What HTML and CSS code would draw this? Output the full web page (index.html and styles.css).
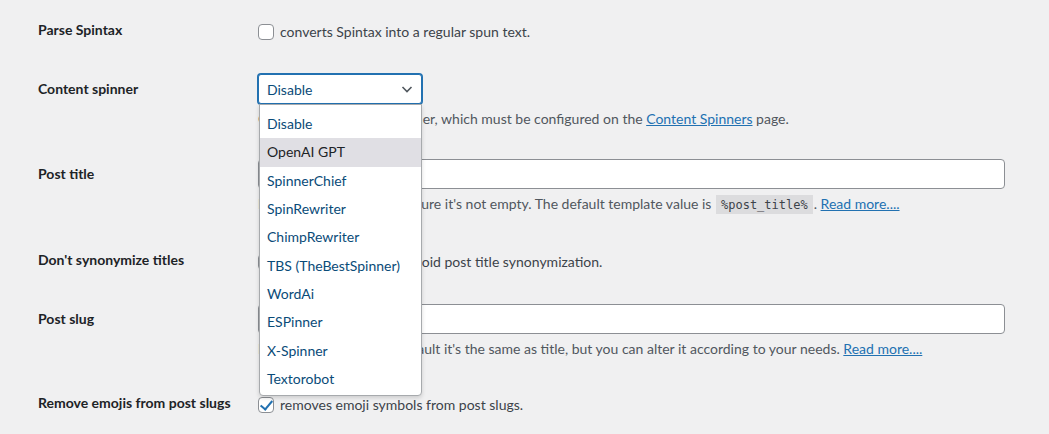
FILE: index.html
```html
<!DOCTYPE html>
<html>
<head>
<meta charset="utf-8">
<link rel="stylesheet" href="styles.css">
</head>
<body>
<div class="settings">
  <div class="row row-check">
    <div class="label">Parse Spintax</div>
    <div class="field">
      <label class="check"><input type="checkbox" class="box">converts Spintax into a regular spun text.</label>
    </div>
  </div>

  <div class="row">
    <div class="label">Content spinner</div>
    <div class="field">
      <div class="select-wrap">
        <div class="select">
          <span>Disable</span>
          <svg class="chev" width="14" height="14" viewBox="0 0 14 14"><path d="M2.5 5 L7 9.5 L11.5 5" fill="none" stroke="#50575e" stroke-width="1.6"/></svg>
        </div>
        <ul class="dropdown">
          <li>Disable</li>
          <li class="hover">OpenAI GPT</li>
          <li>SpinnerChief</li>
          <li>SpinRewriter</li>
          <li>ChimpRewriter</li>
          <li>TBS (TheBestSpinner)</li>
          <li>WordAi</li>
          <li>ESPinner</li>
          <li>X-Spinner</li>
          <li>Textorobot</li>
        </ul>
      </div>
      <p class="description">Choose your content spinner, which must be configured on the <a href="#">Content Spinners</a> page.</p>
    </div>
  </div>

  <div class="row">
    <div class="label">Post title</div>
    <div class="field">
      <input type="text" class="text-input">
      <p class="description">Post title template. Make sure it's not empty. The default template value is <code>%post_title%</code>. <a href="#">Read more....</a></p>
    </div>
  </div>

  <div class="row row-check">
    <div class="label">Don't synonymize titles</div>
    <div class="field">
      <label class="check"><input type="checkbox" class="box">Check this option to avoid post title synonymization.</label>
    </div>
  </div>

  <div class="row">
    <div class="label">Post slug</div>
    <div class="field">
      <input type="text" class="text-input">
      <p class="description">Post slug template. By default it's the same as title, but you can alter it according to your needs. <a href="#">Read more....</a></p>
    </div>
  </div>

  <div class="row row-check">
    <div class="label">Remove emojis from post slugs</div>
    <div class="field">
      <label class="check"><input type="checkbox" class="box" checked>removes emoji symbols from post slugs.</label>
    </div>
  </div>
</div>
</body>
</html>
```

FILE: styles.css
```css
html, body {
  margin: 0;
  padding: 0;
  background: #f0f0f1;
}

body {
  font-family: Lato, "Open Sans", sans-serif;
  font-size: 14px;
  color: #3c434a;
  overflow: hidden;
}

.settings {
  padding: 1px 34px 0 38px;
}

.row {
  display: grid;
  grid-template-columns: 210px 1fr;
}

.label {
  padding: 21px 10px 19px 0;
  font-weight: 700;
  line-height: 1.3;
  color: #1d2327;
}

.field {
  padding: 15px 10px;
  min-width: 0;
}

.row-check .field {
  padding: 17px 10px 13px;
  height: 28px;
}

.row-check .label {
  padding-top: 20px;
}

.check {
  display: flex;
  align-items: center;
  height: 28px;
  line-height: 28px;
}

.box {
  appearance: none;
  -webkit-appearance: none;
  margin: 0 6px 0 0;
  width: 16px;
  height: 16px;
  border: 1px solid #8c8f94;
  border-radius: 4px;
  background: #fff;
  box-sizing: border-box;
  flex: none;
  position: relative;
}

.box:checked::before {
  content: "";
  position: absolute;
  left: 4px;
  top: 0px;
  width: 5px;
  height: 10px;
  border: solid #2271b1;
  border-width: 0 2.5px 2.5px 0;
  transform: rotate(40deg);
}

.select-wrap {
  position: relative;
  width: 164px;
}

.select {
  box-sizing: border-box;
  height: 30px;
  width: 164px;
  border: 1px solid #2271b1;
  box-shadow: 0 0 0 1px #2271b1;
  border-radius: 3px;
  background: #fff;
  display: flex;
  align-items: center;
  justify-content: space-between;
  padding: 0 7px 0 8px;
  color: #0a4b78;
}

.chev {
  display: block;
}

.dropdown {
  position: absolute;
  left: 1px;
  top: 100%;
  width: 163px;
  box-sizing: border-box;
  margin: 0;
  padding: 5px 0 2px;
  list-style: none;
  background: #fff;
  border: 1px solid #a7aaad;
  border-radius: 0 0 4px 4px;
  box-shadow: 0 2px 4px rgba(0, 0, 0, 0.15);
  z-index: 10;
}

.dropdown li {
  height: 28.33px;
  line-height: 28.33px;
  padding: 0 7px;
  color: #0a4b78;
  white-space: nowrap;
}

.dropdown li.hover {
  background: #e0dfe4;
  color: #1d2327;
}

.description {
  margin: 4px 0 0;
  line-height: 21px;
  color: #50575e;
  white-space: nowrap;
}

.description a {
  color: #2271b1;
  text-decoration: underline;
}

code {
  font-family: "DejaVu Sans Mono", "Liberation Mono", monospace;
  font-size: 12px;
  background: #dcdcde;
  padding: 3px 5px 2px;
  margin: 0 1px;
  color: #3c434a;
}

.text-input {
  display: block;
  box-sizing: border-box;
  width: 100%;
  height: 30px;
  margin: 0;
  border: 1px solid #8c8f94;
  border-radius: 4px;
  background: #fff;
  font: inherit;
}
```
